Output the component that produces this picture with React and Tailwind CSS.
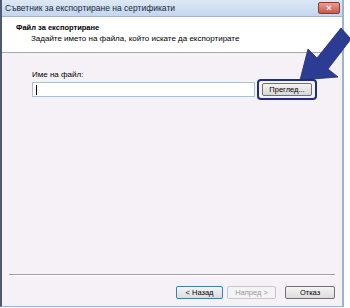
export default function App() {
  return (
    <div className="relative w-[350px] h-[308px] bg-white overflow-hidden font-['Liberation_Sans',Arial,sans-serif] text-black">
      <div className="flex flex-col w-[344px] h-[307px] border-l-2 border-r-2 border-l-[#4d5a72] border-r-[#9db3d3] border-b border-b-[#9db3d3]">
        {/* title bar */}
        <div className="flex items-center justify-between h-[17px] pl-[3px] pr-[2px] bg-gradient-to-b from-[#dde8f5] to-[#c4d6ee] border-b border-[#9fb5d2]">
          <span className="text-[8.5px] text-[#1a2a3a] leading-none">Съветник за експортиране на сертификати</span>
          <span className="flex items-center justify-center w-[22px] h-[12px] rounded-[2px] bg-gradient-to-b from-[#e7a08f] to-[#c7594a] border border-[#8a3a33] text-white text-[9px] leading-none font-bold">×</span>
        </div>
        {/* header */}
        <div className="h-[36px] bg-white border-b border-[#a8a8a8] pl-[14px] pt-[6px]">
          <div className="text-[7.5px] font-bold leading-[9px]">Файл за експортиране</div>
          <div className="text-[8px] leading-[10px] pl-[15px] mt-[2px]">Задайте името на файла, който искате да експортирате</div>
        </div>
        {/* body */}
        <div className="flex flex-col flex-1 bg-[#f6f1f6]">
          <div className="pl-[30px] pt-[17px]">
            <div className="text-[8px] leading-[10px]">Име на файл:</div>
            <div className="flex items-center mt-[-1px]">
              <div className="flex items-center w-[223px] h-[15px] bg-white border border-[#a9bfd6] pl-[3px]">
                <span className="w-px h-[10px] bg-black" />
              </div>
              <div className="ml-[2px] px-[3px] py-[2px] rounded-[4px] border-2 border-[#1f2f7c]">
                <button className="block w-[50px] h-[13px] rounded-[2px] border border-[#707070] bg-gradient-to-b from-[#f2f2f2] to-[#d8d8d8] text-[7.5px] leading-none">Преглед...</button>
              </div>
            </div>
          </div>
          <div className="flex-1" />
          <div className="mx-[7px] h-[2px] border-t border-[#a0a0a0] border-b border-b-white" />
          <div className="flex justify-end items-center gap-[4px] pr-[7px] pt-[10px] pb-[7px]">
            <button className="w-[47px] h-[13px] rounded-[2px] border border-[#3c7fb1] bg-gradient-to-b from-[#f4f4f4] to-[#dcdcdc] text-[7.5px] leading-none">&lt; Назад</button>
            <button className="w-[49px] h-[13px] rounded-[2px] border border-[#c6c6c6] bg-[#f4f4f4] text-[7.5px] leading-none text-[#9a9a9a]">Напред &gt;</button>
            <button className="w-[50px] h-[13px] ml-[5px] rounded-[2px] border border-[#707070] bg-gradient-to-b from-[#f4f4f4] to-[#dcdcdc] text-[7.5px] leading-none">Отказ</button>
          </div>
        </div>
      </div>
      {/* pointer arrow */}
      <svg className="absolute left-0 top-0" width="350" height="308" viewBox="0 0 350 308">
        <polygon
          points="300,80 308,49 317,58 341,28 351,39 328,69 338,77"
          fill="#2b3c92"
          stroke="#1d2b70"
          strokeWidth="0.8"
          strokeLinejoin="round"
        />
      </svg>
    </div>
  );
}
